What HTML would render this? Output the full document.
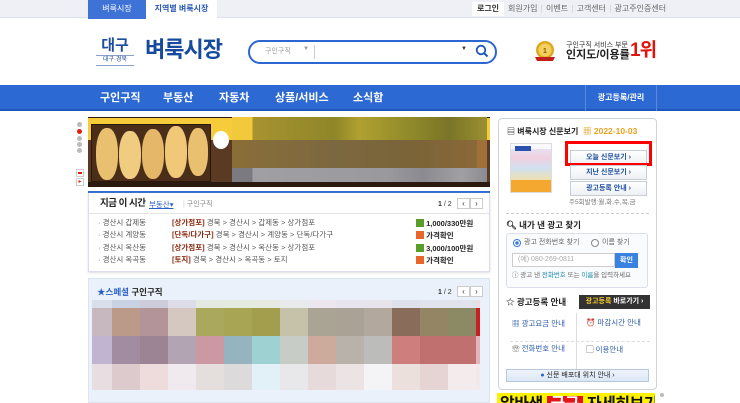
<!DOCTYPE html>
<html><head><meta charset="utf-8"><style>
*{margin:0;padding:0;box-sizing:border-box}
body{width:740px;height:403px;overflow:hidden;background:#fff;font-family:"Liberation Sans","Noto Sans CJK KR",sans-serif;position:relative;font-size:8px;color:#333}
.a{position:absolute}
</style></head><body>
<!-- top bar -->
<div class="a" style="left:0;top:0;width:740px;height:18px;background:#eef0f5;border-bottom:1px solid #dde0e8"></div>
<div class="a" style="left:88px;top:0;width:58px;height:19px;background:#3e72d6;color:#fff;font-size:8px;line-height:18px;text-align:center">벼룩시장</div>
<div class="a" style="left:146px;top:0;width:71px;height:19px;background:#fff;color:#2a5bb8;font-size:8px;font-weight:bold;line-height:18px;text-align:center">지역별 벼룩시장</div>
<div class="a" style="left:472px;top:2px;width:32px;height:14px;background:#fff;font-size:8px;font-weight:bold;line-height:14px;text-align:center;color:#333">로그인</div>
<div class="a" style="left:508px;top:2px;font-size:8px;line-height:14px;color:#666;word-spacing:1px">회원가입 <span style="color:#ccc">|</span> 이벤트 <span style="color:#ccc">|</span> 고객센터 <span style="color:#ccc">|</span> 광고주인증센터</div>
<!-- logo -->
<div class="a" style="left:96px;top:37px;width:38px;text-align:center;color:#1d4f9e;font-size:15px;font-weight:bold;line-height:17px">대구</div>
<div class="a" style="left:96px;top:55px;width:38px;border-top:1px solid #8aa0c8;border-bottom:1px solid #8aa0c8;text-align:center;color:#1d4f9e;font-size:6px;line-height:9px">대구·경북</div>
<div class="a" style="left:145px;top:36px;color:#164a9e;font-size:22px;font-weight:bold;line-height:28px;letter-spacing:-1px">벼룩시장</div>
<!-- search -->
<div class="a" style="left:248px;top:40px;width:249px;height:24px;border:2px solid #2d66d0;border-radius:12px"></div>
<div class="a" style="left:265px;top:46px;font-size:7px;color:#999">구인구직</div>
<div class="a" style="left:303px;top:46px;font-size:6px;color:#999">▼</div>
<div class="a" style="left:314px;top:45px;width:1px;height:14px;background:#ccd"></div>
<div class="a" style="left:461px;top:46px;font-size:6px;color:#333">▼</div>
<svg class="a" style="left:475px;top:44px" width="14" height="14" viewBox="0 0 14 14"><circle cx="6" cy="6" r="4.3" fill="none" stroke="#1e55bd" stroke-width="1.8"/><path d="M9 9l3.5 3.5" stroke="#1e55bd" stroke-width="2"/></svg>
<!-- award -->
<svg class="a" style="left:534px;top:40px" width="22" height="24" viewBox="0 0 22 24"><circle cx="11" cy="10" r="9" fill="#e0a820"/><circle cx="11" cy="10" r="6.5" fill="#f4d060"/><text x="11" y="13" font-size="7" text-anchor="middle" fill="#8a5a00" font-weight="bold">1</text><path d="M1 17h20l-2 4H3z" fill="#c0201c"/></svg>
<div class="a" style="left:566px;top:42px;font-size:7px;color:#333;line-height:8px">구인구직 서비스 부문</div>
<div class="a" style="left:566px;top:49px;font-size:11px;font-weight:bold;color:#222;line-height:13px">인지도/이용률</div>
<div class="a" style="left:630px;top:40px;font-size:19px;font-weight:bold;color:#e0140e;line-height:22px;letter-spacing:-1px">1위</div>
<!-- nav -->
<div class="a" style="left:0;top:85px;width:740px;height:26px;background:#2d69d2;border-bottom:2px solid #1f56bb"></div>
<div class="a" style="left:100px;top:85px;height:26px;line-height:26px;color:#fff;font-size:11px;font-weight:bold">구인구직</div>
<div class="a" style="left:163px;top:85px;line-height:26px;color:#fff;font-size:11px;font-weight:bold">부동산</div>
<div class="a" style="left:219px;top:85px;line-height:26px;color:#fff;font-size:11px;font-weight:bold">자동차</div>
<div class="a" style="left:275px;top:85px;line-height:26px;color:#fff;font-size:11px;font-weight:bold">상품/서비스</div>
<div class="a" style="left:353px;top:85px;line-height:26px;color:#fff;font-size:11px;font-weight:bold">소식함</div>
<div class="a" style="left:585px;top:85px;width:1px;height:26px;background:#5a8ae0"></div>
<div class="a" style="left:656px;top:85px;width:1px;height:26px;background:#5a8ae0"></div>
<div class="a" style="left:586px;top:85px;width:70px;line-height:26px;color:#fff;font-size:8px;font-weight:bold;text-align:center">광고등록/관리</div>
<!-- side dots -->
<div class="a" style="left:77px;top:122px;width:5px;height:5px;border-radius:50%;background:#bbb"></div>
<div class="a" style="left:77px;top:129px;width:5px;height:5px;border-radius:50%;background:#d21"></div>
<div class="a" style="left:77px;top:136px;width:5px;height:5px;border-radius:50%;background:#bbb"></div>
<div class="a" style="left:77px;top:142px;width:5px;height:5px;border-radius:50%;background:#bbb"></div>
<div class="a" style="left:77px;top:148px;width:5px;height:5px;border-radius:50%;background:#bbb"></div>
<div class="a" style="left:76px;top:169px;width:8px;height:8px;border:1px solid #ccc;background:#fff"><div style="margin:2px 1px;width:4px;height:2px;background:#d21"></div></div>
<div class="a" style="left:76px;top:178px;width:8px;height:8px;border:1px solid #ccc;background:#fff;color:#d21;font-size:6px;line-height:6px;text-align:center">▸</div>
<!-- banner -->
<div class="a" style="left:88px;top:117px;width:402px;height:70px;background:#2a1a10"></div>
<div class="a" style="left:88px;top:118px;width:402px;height:22px;background:#f6cc3a"></div>
<div class="a" style="left:88px;top:140px;width:402px;height:42px;background:#5a3a22"></div>
<div class="a" style="left:91px;top:124px;width:120px;height:58px;background:#4a2e1a;border:1px solid #2a1808"></div>
<div class="a" style="left:96px;top:128px;width:22px;height:52px;border-radius:45%;background:#e8c070"></div>
<div class="a" style="left:119px;top:131px;width:22px;height:48px;border-radius:45%;background:#f0cc80"></div>
<div class="a" style="left:142px;top:129px;width:22px;height:50px;border-radius:45%;background:#e4b868"></div>
<div class="a" style="left:165px;top:126px;width:22px;height:52px;border-radius:45%;background:#f0c878"></div>
<div class="a" style="left:188px;top:128px;width:20px;height:48px;border-radius:45%;background:#e8c070"></div>
<div class="a" style="left:213px;top:131px;width:16px;height:18px;border-radius:50%;background:#fff"></div>
<div class="a" style="left:232px;top:117px;width:255px;height:23px;background:linear-gradient(90deg,#f2c93a 0,#f2c93a 8%,#a89330 8%,#8e8628 40%,#b0a030 50%,#908a2a 70%,#7a7428 85%,#9a9030 100%)"></div>
<div class="a" style="left:232px;top:140px;width:255px;height:28px;background:linear-gradient(90deg,#8a6e38,#7c6840 40%,#7a6438 70%,#8a6838 96%,#a07038 96%)"></div>
<div class="a" style="left:232px;top:168px;width:255px;height:14px;background:linear-gradient(90deg,#7a7a80 0,#7a7a80 8%,#a0a0a4 8%,#9a9a9e 60%,#8a8a90 75%,#a0a0a4 90%,#8a8a90)"></div>
<div class="a" style="left:88px;top:191px;width:402px;height:2px;background:#2d69d2"></div>
<!-- now card -->
<div class="a" style="left:88px;top:193px;width:402px;height:79px;background:#fff;border:1px solid #dde;border-top:none;box-shadow:0 1px 2px #ddd"></div>
<div class="a" style="left:100px;top:197px;font-size:9.5px;font-weight:bold;color:#222;line-height:14px;letter-spacing:-0.5px">지금 이 시간</div>
<div class="a" style="left:149px;top:199px;font-size:7.5px;color:#2a62c8;line-height:11px;text-decoration:underline">부동산▾</div>
<div class="a" style="left:183px;top:199px;font-size:7px;color:#888;line-height:11px"><span style="color:#ccc">|</span> 구인구직</div>
<div class="a" style="left:438px;top:200px;font-size:7px;color:#333;line-height:10px"><b>1</b> / 2</div>
<div class="a" style="left:457px;top:198px;width:13px;height:11px;border:1px solid #ccc;font-size:8px;line-height:9px;text-align:center">‹</div>
<div class="a" style="left:470px;top:198px;width:13px;height:11px;border:1px solid #ccc;font-size:8px;line-height:9px;text-align:center">›</div>
<div class="a" style="left:89px;top:213px;width:400px;height:1px;background:#e5e5e5"></div>
<div class="a" style="left:98px;top:217px;font-size:7.5px;line-height:12.3px;color:#555">· 경산시 갑제동<br>· 경산시 계양동<br>· 경산시 옥산동<br>· 경산시 옥곡동</div>
<div class="a" style="left:172px;top:217px;font-size:7.5px;line-height:12.3px;color:#555;white-space:nowrap"><b style="color:#8a2a10">[상가점포]</b> 경북 &gt; 경산시 &gt; 갑제동 &gt; 상가점포<br><b style="color:#8a2a10">[단독/다가구]</b> 경북 &gt; 경산시 &gt; 계양동 &gt; 단독/다가구<br><b style="color:#8a2a10">[상가점포]</b> 경북 &gt; 경산시 &gt; 옥산동 &gt; 상가점포<br><b style="color:#8a2a10">[토지]</b> 경북 &gt; 경산시 &gt; 옥곡동 &gt; 토지</div>
<div class="a" style="left:416px;top:218px;font-size:7.5px;line-height:12.3px;color:#222;font-weight:bold;white-space:nowrap"><span style="display:inline-block;width:8px;height:8px;background:#5a9e2a;vertical-align:-1px"></span> 1,000/330만원<br><span style="display:inline-block;width:8px;height:8px;background:#e8662a;vertical-align:-1px"></span> 가격확인<br><span style="display:inline-block;width:8px;height:8px;background:#5a9e2a;vertical-align:-1px"></span> 3,000/100만원<br><span style="display:inline-block;width:8px;height:8px;background:#e8662a;vertical-align:-1px"></span> 가격확인</div>
<!-- special card -->
<div class="a" style="left:88px;top:278px;width:402px;height:125px;background:#eaf1fb;border:1px solid #dde4ee"></div>
<div class="a" style="left:97px;top:286px;font-size:8.5px;font-weight:bold;line-height:12px"><span style="color:#2a62c8">★스페셜</span> <span style="color:#222">구인구직</span></div>
<div class="a" style="left:438px;top:288px;font-size:7px;color:#333;line-height:10px"><b>1</b> / 2</div>
<div class="a" style="left:457px;top:286px;width:13px;height:11px;border:1px solid #ccc;background:#fff;font-size:8px;line-height:9px;text-align:center">‹</div>
<div class="a" style="left:470px;top:286px;width:13px;height:11px;border:1px solid #ccc;background:#fff;font-size:8px;line-height:9px;text-align:center">›</div>
<div class="a" style="left:92px;top:300px;width:388px;height:100px;display:grid;grid-template-columns:20px repeat(13,28px) 4px;grid-template-rows:8px 28px 28px 26px">
<div style="background:#d8dfea"></div><div style="background:#c8d2e2"></div><div style="background:#ccccda"></div><div style="background:#dcdde8"></div><div style="background:#e4eae2"></div><div style="background:#e6ebe2"></div><div style="background:#e6eae2"></div><div style="background:#e8eaec"></div><div style="background:#ece6ee"></div><div style="background:#e6e4ec"></div><div style="background:#e8e4ec"></div><div style="background:#dee0ec"></div><div style="background:#e0e2ec"></div><div style="background:#e0e2ec"></div><div style="background:#ecdde4"></div>
<div style="background:#c6b8be"></div><div style="background:#bb9a8a"></div><div style="background:#b39498"></div><div style="background:#d4c8c0"></div><div style="background:#aaa85c"></div><div style="background:#a8a654"></div><div style="background:#a29e4e"></div><div style="background:#c6c2aa"></div><div style="background:#aaa494"></div><div style="background:#aaa294"></div><div style="background:#b2a89e"></div><div style="background:#8a6c5a"></div><div style="background:#948664"></div><div style="background:#8c8a64"></div><div style="background:#c82020"></div>
<div style="background:#c0b4d0"></div><div style="background:#a28ca2"></div><div style="background:#9c8494"></div><div style="background:#b2a4b2"></div><div style="background:#cc98a2"></div><div style="background:#96b4c0"></div><div style="background:#9ed2d2"></div><div style="background:#c8ccc6"></div><div style="background:#ceaa9c"></div><div style="background:#b8b2aa"></div><div style="background:#bcbcba"></div><div style="background:#ce7e7c"></div><div style="background:#c0706e"></div><div style="background:#c0706e"></div><div style="background:#e4b4b8"></div>
<div style="background:#e8dee2"></div><div style="background:#dccacc"></div><div style="background:#eedcdc"></div><div style="background:#f0eaee"></div><div style="background:#e4dedc"></div><div style="background:#dcdada"></div><div style="background:#e2f0f8"></div><div style="background:#e8e8ea"></div><div style="background:#e6dadb"></div><div style="background:#ece4e4"></div><div style="background:#f4f4f6"></div><div style="background:#ece0dc"></div><div style="background:#e6d4d2"></div><div style="background:#f4ecec"></div><div style="background:#f0eaec"></div>
</div>
<!-- right panel -->
<div class="a" style="left:498px;top:118px;width:159px;height:272px;border:1px solid #cfd4dc;border-radius:4px;background:#fff"></div>
<div class="a" style="left:507px;top:126px;font-size:8px;font-weight:bold;color:#222;line-height:11px">▤ 벼룩시장 신문보기</div>
<div class="a" style="left:583px;top:126px;font-size:8.5px;font-weight:bold;color:#e8a020;line-height:11px">▦ 2022-10-03</div>
<div class="a" style="left:510px;top:143px;width:42px;height:50px;border:1px solid #ddd;background:linear-gradient(#f8f8ff 0,#f8f8ff 10%,#e8e0f0 10%,#f0d0e0 30%,#d0e0f0 50%,#f0e0b0 75%,#f4a830 75%)"></div>
<div class="a" style="left:515px;top:146px;width:16px;height:5px;background:#2a50b0"></div>
<div class="a" style="left:570px;top:150px;width:77px;height:15px;border:1px solid #c8ccd4;background:linear-gradient(#fff,#eef0f4);font-size:7px;font-weight:bold;color:#1d4f9e;text-align:center;line-height:13px">오늘 신문보기 ›</div>
<div class="a" style="left:565px;top:141px;width:87px;height:25px;border:3px solid #f00"></div>
<div class="a" style="left:570px;top:165px;width:77px;height:15px;border:1px solid #c8ccd4;background:linear-gradient(#fff,#eef0f4);font-size:7px;font-weight:bold;color:#1d4f9e;text-align:center;line-height:13px">지난 신문보기 ›</div>
<div class="a" style="left:570px;top:181px;width:77px;height:15px;border:1px solid #c8ccd4;background:linear-gradient(#fff,#eef0f4);font-size:7px;font-weight:bold;color:#1d4f9e;text-align:center;line-height:13px">광고등록 안내 ›</div>
<div class="a" style="left:569px;top:198px;font-size:6.5px;color:#777;line-height:9px">주5회발행:월,화,수,목,금</div>
<div class="a" style="left:506px;top:213px;width:143px;border-top:1px dashed #ccc"></div>
<div class="a" style="left:506px;top:219px;font-size:8.5px;font-weight:bold;color:#222;line-height:12px">🔍︎ 내가 낸 광고 찾기</div>
<div class="a" style="left:506px;top:233px;width:142px;height:55px;border:1px solid #dde;border-radius:3px;background:#fafbfc"></div>
<div class="a" style="left:513px;top:239px;width:8px;height:8px;border-radius:50%;border:1px solid #3a7ae0;background:radial-gradient(#3a7ae0 40%,#fff 45%)"></div>
<div class="a" style="left:524px;top:238px;font-size:7px;color:#666;line-height:10px">광고 전화번호 찾기</div>
<div class="a" style="left:591px;top:239px;width:8px;height:8px;border-radius:50%;border:1px solid #888;background:#fff"></div>
<div class="a" style="left:602px;top:238px;font-size:7px;color:#666;line-height:10px">이름 찾기</div>
<div class="a" style="left:512px;top:253px;width:103px;height:14px;border:1px solid #ccc;background:#fff;font-size:7px;color:#aaa;line-height:12px;padding-left:5px">(예) 080-269-0811</div>
<div class="a" style="left:615px;top:253px;width:23px;height:15px;background:#3a82e0;color:#fff;font-size:7px;font-weight:bold;line-height:15px;text-align:center">확인</div>
<div class="a" style="left:512px;top:271px;font-size:6.5px;color:#666;line-height:9px">ⓘ 광고 낸 <span style="color:#1a8ab0">전화번호</span> 또는 <span style="color:#1a8ab0">이름</span>을 입력하세요</div>
<div class="a" style="left:506px;top:296px;font-size:8.5px;font-weight:bold;color:#222;line-height:12px">☆ 광고등록 안내</div>
<div class="a" style="left:579px;top:295px;width:71px;height:14px;background:#333;color:#fff;font-size:7px;font-weight:bold;line-height:14px;text-align:center"><span style="color:#f4c830">광고등록</span> 바로가기 ›</div>
<div class="a" style="left:576px;top:313px;width:1px;height:56px;background:#ddd"></div>
<div class="a" style="left:510px;top:341px;width:140px;border-top:1px dashed #ddd"></div>
<div class="a" style="left:512px;top:319px;font-size:7.5px;color:#2a5aa8;line-height:10px"><span style="color:#1d4f9e">▦</span> 광고요금 안내</div>
<div class="a" style="left:586px;top:318px;font-size:7.5px;color:#2a5aa8;line-height:10px"><span style="color:#333">⏰</span> 마감시간 안내</div>
<div class="a" style="left:512px;top:344px;font-size:7.5px;color:#2a5aa8;line-height:10px"><span style="color:#333">☏</span> 전화번호 안내</div>
<div class="a" style="left:586px;top:345px;font-size:7.5px;color:#2a5aa8;line-height:10px"><span style="color:#333">▢</span> 이용안내</div>
<div class="a" style="left:506px;top:369px;width:143px;height:13px;border:1px solid #b8c8dc;background:linear-gradient(#eef4fc,#dce8f6);font-size:7px;color:#222;text-align:center;line-height:11px"><span style="color:#2a62c8">●</span> 신문 배포대 위치 안내 ›</div>
<!-- bottom yellow band -->
<div class="a" style="left:497px;top:393px;width:158px;height:10px;background:#fff200;overflow:hidden">
<div style="position:absolute;left:3px;top:3px;font-size:16px;font-weight:bold;color:#111;line-height:18px;white-space:nowrap;letter-spacing:-0.5px">알바생 <span style="background:#e4141a;color:#fff">&nbsp;급구&nbsp;</span> 자세히보기</div>
</div>
<div class="a" style="left:660px;top:393px;width:4px;height:4px;border-radius:50%;background:#bbb"></div>
</body></html>
